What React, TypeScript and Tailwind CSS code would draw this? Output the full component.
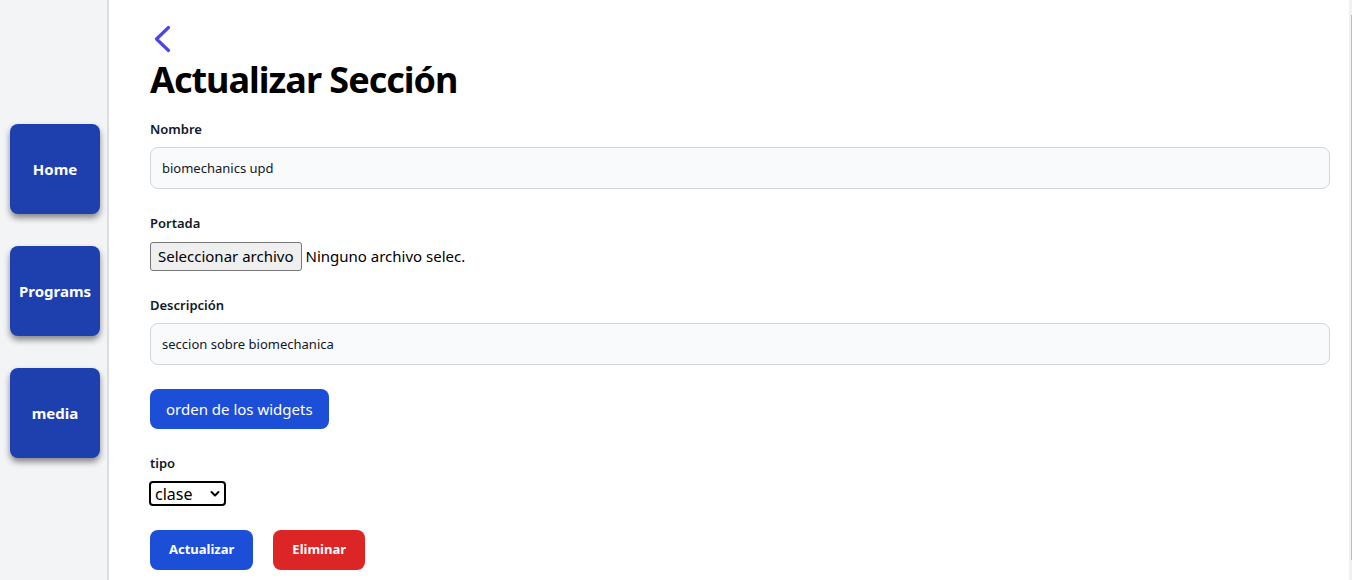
import React from "react";

const font = { fontFamily: '"Noto Sans", "Open Sans", sans-serif' };

function NavButton({ label }: { label: string }) {
  return (
    <button className="w-[90px] h-[90px] rounded-lg bg-[#1e40af] text-white font-bold text-[15px] shadow-[0_4px_6px_rgba(0,0,0,0.45)] flex items-center justify-center">
      {label}
    </button>
  );
}

function Label({ children }: { children: React.ReactNode }) {
  return <label className="block mb-2 text-[13px] leading-5 font-semibold text-gray-900">{children}</label>;
}

export default function App() {
  return (
    <div className="flex h-[580px] w-[1352px] bg-white overflow-hidden" style={font}>
      <aside className="w-[109px] shrink-0 bg-[#f3f4f6] border-r-2 border-[#dcdde0] flex flex-col items-start justify-center gap-8 pl-[10px] pt-[2px]">
        <NavButton label="Home" />
        <NavButton label="Programs" />
        <NavButton label="media" />
      </aside>
      <main className="flex-1 pl-[41px] pr-[19px] pt-[24px] bg-white">
        <button className="block h-[30px] w-[30px] text-[#4b46ec]">
          <svg viewBox="0 0 30 30" width="30" height="30" fill="none" stroke="currentColor" strokeWidth="3.2" strokeLinecap="round" strokeLinejoin="round">
            <path d="M18.5 3.5 L6.5 15 L18.5 26.5" />
          </svg>
        </button>
        <h1 className="mt-[6px] text-[36px] leading-10 font-bold text-black mb-[19px] tracking-[-1px]">Actualizar Sección</h1>

        <div className="mb-6">
          <Label>Nombre</Label>
          <div className="bg-gray-50 border border-gray-300 text-gray-900 text-[13px] leading-5 rounded-lg w-full py-2.5 pl-[11px] pr-2.5">biomechanics upd</div>
        </div>

        <div className="mb-6">
          <Label>Portada</Label>
          <div className="flex items-center text-[15px] text-black pt-[1px]">
            <span className="h-[29px] px-[7px] flex items-center bg-[#efefef] border border-[#767676] rounded-[3px] text-black">Seleccionar archivo</span>
            <span className="ml-[4px]">Ninguno archivo selec.</span>
          </div>
        </div>

        <div className="mb-6">
          <Label>Descripción</Label>
          <div className="bg-gray-50 border border-gray-300 text-gray-900 text-[13px] leading-5 rounded-lg w-full py-2.5 pl-[11px] pr-2.5">seccion sobre biomechanica</div>
        </div>

        <div className="mb-6">
          <button className="h-[40px] px-4 rounded-lg bg-[#1d4ed8] text-white text-[15px] leading-6">orden de los widgets</button>
        </div>

        <div className="mb-6">
          <Label>tipo</Label>
          <div className="ml-[-1px] w-[77px] h-[25px] border-2 border-black rounded-[4px] flex items-center justify-between pl-[4px] pr-[4px] text-[16px] text-black bg-white">
            <span className="leading-none">clase</span>
            <svg width="10" height="8" viewBox="0 0 10 8" fill="none" stroke="black" strokeWidth="2" strokeLinecap="round" strokeLinejoin="round">
              <path d="M1.5 2 L5 5.5 L8.5 2" />
            </svg>
          </div>
        </div>

        <div className="flex gap-5">
          <button className="h-[40px] px-[19px] rounded-lg bg-[#1d4ed8] text-white text-[13px] font-bold">Actualizar</button>
          <button className="h-[40px] px-[19px] rounded-lg bg-[#dc2626] text-white text-[13px] font-bold">Eliminar</button>
        </div>
      </main>
      <div className="w-[3px] shrink-0 bg-[#f1f1f1] pt-[15px] pb-[20px] flex justify-end">
        <div className="w-[1px] h-full bg-[#bdbdbd]" />
      </div>
    </div>
  );
}
